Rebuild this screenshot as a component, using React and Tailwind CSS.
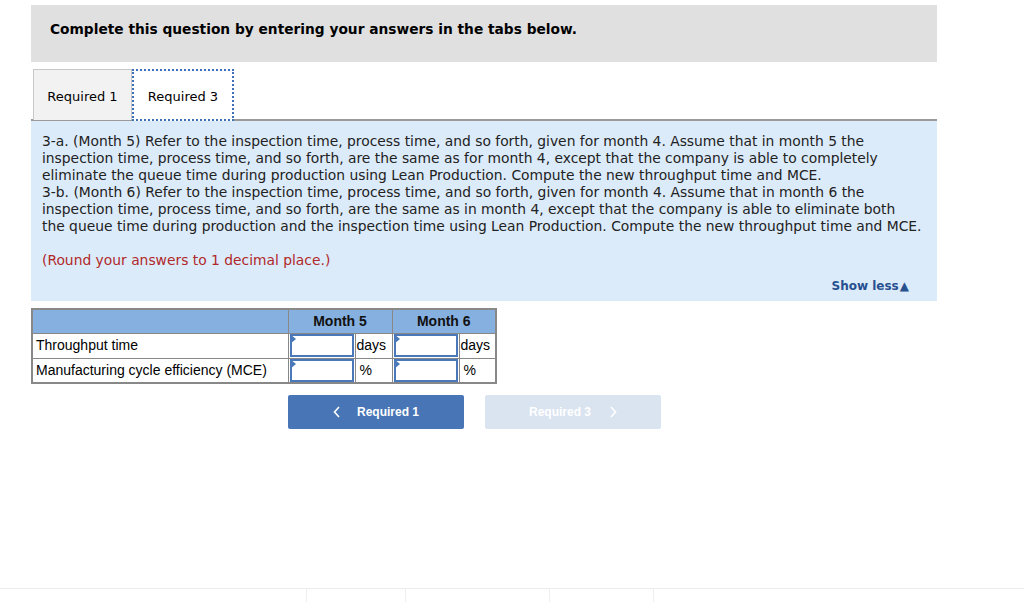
import React from 'react';

const lines = [
  '3-a. (Month 5) Refer to the inspection time, process time, and so forth, given for month 4. Assume that in month 5 the',
  'inspection time, process time, and so forth, are the same as for month 4, except that the company is able to completely',
  'eliminate the queue time during production using Lean Production. Compute the new throughput time and MCE.',
  '3-b. (Month 6) Refer to the inspection time, process time, and so forth, given for month 4. Assume that in month 6 the',
  'inspection time, process time, and so forth, are the same as in month 4, except that the company is able to eliminate both',
  'the queue time during production and the inspection time using Lean Production. Compute the new throughput time and MCE.',
];

const InputCell = () => (
  <td className="border border-[#888] p-0 h-[25px] w-[67px]">
    <div className="relative h-[23px] border-2 border-[#4a78b8] mx-[1px] bg-white">
      <span className="absolute -left-[2px] -top-[2px] w-0 h-0 border-t-[5px] border-b-[5px] border-l-[6px] border-t-transparent border-b-transparent border-l-[#4a78b8]" />
    </div>
  </td>
);

const App = () => {
  return (
    <div className="w-[1024px] h-[602px] bg-white relative overflow-hidden" style={{ fontFamily: 'Verdana, "DejaVu Sans", sans-serif' }}>
      <div className="pt-[5px] pl-[31px]">
        <div className="w-[906px] h-[57px] bg-[#e0e0e0] pl-[19px] pt-[15px]">
          <h2 className="text-[13.75px] leading-[18px] font-bold text-black">Complete this question by entering your answers in the tabs below.</h2>
        </div>

        <div className="mt-[7px] w-[906px] flex border-b-2 border-[#9a9a9a] h-[52px]">
          <div className="ml-[2px] w-[99px] h-[51px] bg-[#f2f2f2] border border-[#c8c8c8] border-b-0 flex items-center justify-center pt-[4px] text-[13px] text-black">
            Required 1
          </div>
          <div className="w-[102px] h-[52px] bg-white border-2 border-dotted border-[#3f6fb8] flex items-center justify-center pt-[4px] text-[13px] text-black -mb-[2px]">
            Required 3
          </div>
        </div>

        <div className="w-[906px] h-[180px] bg-[#dcebf9] pt-[12px] pl-[11px] pr-[28px] relative">
          <div className="text-[13.85px] leading-[17px] text-[#222]">
            {lines.map((l) => (
              <div key={l} className="whitespace-nowrap">{l}</div>
            ))}
            <div className="h-[17px]" />
            <div className="text-[#b0282a] whitespace-nowrap">(Round your answers to 1 decimal place.)</div>
          </div>
          <div className="flex justify-end items-center mt-[8px] text-[12px] font-bold text-[#27508f]">
            <span>Show less</span>
            <span className="text-[12px] ml-[1px] leading-[18px]">▲</span>
          </div>
        </div>

        <table className="mt-[7px] border-collapse border-2 border-[#888] text-[14px] text-black" style={{ fontFamily: '"Liberation Sans", Arial, sans-serif' }}>
          <thead>
            <tr className="bg-[#86b0e0] h-[24px]">
              <th className="border border-[#888] w-[256px]"></th>
              <th colSpan={2} className="border border-[#888] font-bold text-[14px] text-[#111]">Month 5</th>
              <th colSpan={2} className="border border-[#888] font-bold text-[14px] text-[#111]">Month 6</th>
            </tr>
          </thead>
          <tbody>
            <tr className="h-[25px]">
              <td className="border border-[#888] pl-[3px]">Throughput time</td>
              <InputCell />
              <td className="border border-[#888] px-[1px] w-[37px]">days</td>
              <InputCell />
              <td className="border border-[#888] px-[1px] w-[37px]">days</td>
            </tr>
            <tr className="h-[25px]">
              <td className="border border-[#888] pl-[3px]">Manufacturing cycle efficiency (MCE)</td>
              <InputCell />
              <td className="border border-[#888] px-[4px]">%</td>
              <InputCell />
              <td className="border border-[#888] px-[4px]">%</td>
            </tr>
          </tbody>
        </table>

        <div className="flex gap-[21px] ml-[257px] mt-[11px]" style={{ fontFamily: '"Liberation Sans", Arial, sans-serif' }}>
          <button className="w-[176px] h-[34px] bg-[#4775b5] rounded-[2px] flex items-center justify-center gap-[16px] text-white text-[12px] font-bold">
            <svg width="8" height="12" viewBox="0 0 8 12"><path d="M6 1 L1.5 6 L6 11" stroke="white" strokeWidth="1.6" fill="none" /></svg>
            <span>Required 1</span>
          </button>
          <button className="w-[176px] h-[34px] bg-[#dae3f0] rounded-[2px] flex items-center justify-center gap-[18px] text-white text-[12px] font-bold">
            <span>Required 3</span>
            <svg width="8" height="12" viewBox="0 0 8 12"><path d="M2 1 L6.5 6 L2 11" stroke="white" strokeWidth="1.6" fill="none" /></svg>
          </button>
        </div>
      </div>

      <div className="absolute left-0 right-0 top-[588px] border-t border-[#ececec]">
        <div className="flex">
          <span className="ml-[306px] w-px h-[14px] bg-[#eeeeee]" />
          <span className="ml-[98px] w-px h-[14px] bg-[#eeeeee]" />
          <span className="ml-[143px] w-px h-[14px] bg-[#eeeeee]" />
          <span className="ml-[103px] w-px h-[14px] bg-[#eeeeee]" />
        </div>
      </div>
    </div>
  );
};

export default App;
